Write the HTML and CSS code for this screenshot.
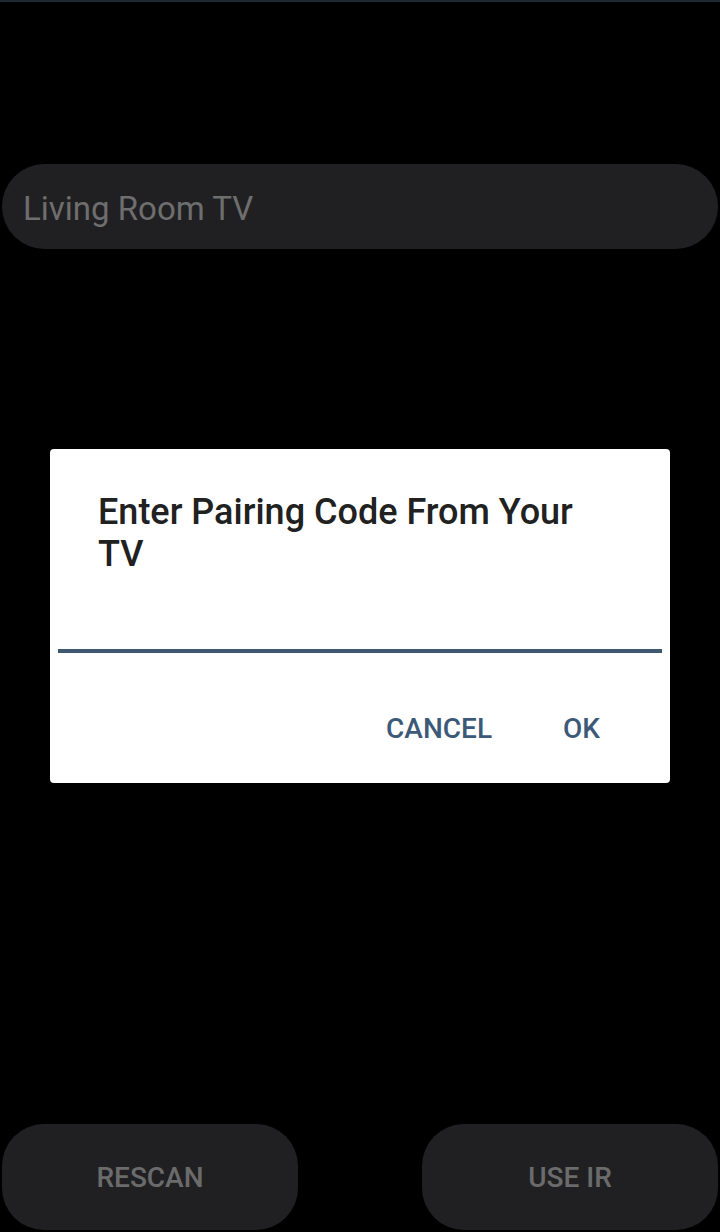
FILE: index.html
```html
<!DOCTYPE html>
<html lang="en">
<head>
<meta charset="utf-8">
<title>Pairing</title>
<link rel="stylesheet" href="styles.css">
</head>
<body>
<div class="screen">
  <div class="topline"></div>
  <div class="device">Living Room TV</div>
  <div class="spacer"></div>
  <div class="actions">
    <div class="action">RESCAN</div>
    <div class="action">USE IR</div>
  </div>
  <div class="dialog">
    <div class="dialog-title">Enter Pairing Code From Your TV</div>
    <div class="dialog-input"></div>
    <div class="dialog-buttons">
      <span class="dlg-btn">CANCEL</span>
      <span class="dlg-btn">OK</span>
    </div>
  </div>
</div>
</body>
</html>
```
FILE: styles.css
```css
html, body {
  margin: 0;
  padding: 0;
  background: #000;
}
body {
  font-family: Roboto, "Liberation Sans", sans-serif;
}
.screen {
  position: relative;
  width: 720px;
  height: 1232px;
  display: flex;
  flex-direction: column;
  background: #000;
  overflow: hidden;
}
.topline {
  height: 2px;
  background: #1e2a33;
}
.device {
  margin: 162px 2px 0;
  height: 85px;
  border-radius: 43px;
  background: #202023;
  color: #6e6e6e;
  font-size: 33px;
  display: flex;
  align-items: center;
  padding-left: 21px;
  padding-top: 3px;
  box-sizing: border-box;
}
.spacer {
  flex: 1;
}
.actions {
  display: flex;
  justify-content: space-between;
  padding: 0 2px 2px;
}
.action {
  width: 296px;
  height: 106px;
  border-radius: 42px;
  background: #202023;
  color: #6b6b6b;
  font-size: 28px;
  font-weight: 500;
  display: flex;
  align-items: center;
  justify-content: center;
}
.dialog {
  position: absolute;
  left: 50px;
  top: 449px;
  width: 620px;
  height: 334px;
  box-sizing: border-box;
  background: #fff;
  border-radius: 4px;
  padding: 42px 8px 0;
  display: flex;
  flex-direction: column;
}
.dialog-title {
  margin: 0 64px 0 40px;
  font-size: 36px;
  line-height: 42px;
  font-weight: 500;
  color: #212121;
}
.dialog-input {
  height: 74px;
  border-bottom: 4px solid #3e5870;
}
.dialog-buttons {
  display: flex;
  justify-content: flex-end;
  gap: 71px;
  padding: 52px 62px 0 0;
}
.dlg-btn {
  font-size: 28px;
  line-height: 48px;
  font-weight: 500;
  color: #3c5a78;
}
```
